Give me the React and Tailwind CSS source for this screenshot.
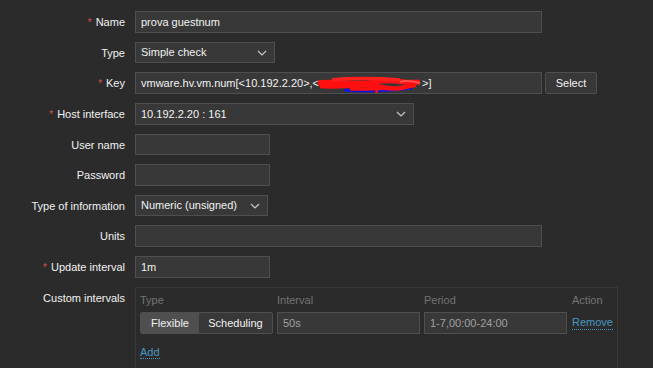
import React from 'react';

const Chevron = () => (
  <svg width="10" height="6" viewBox="0 0 10 6" className="shrink-0">
    <path d="M1 1l4 4 4-4" fill="none" stroke="#c8c8c8" strokeWidth="1.2" />
  </svg>
);

const Label = ({ text, req }) => (
  <div className="w-[125px] shrink-0 text-right pr-0 leading-[22px] whitespace-nowrap">
    {req && <span className="text-[#d64e4e] mr-[4px] text-[10px]">*</span>}
    {text}
  </div>
);

const Input = ({ w, value, children }) => (
  <div className={`${w} relative h-[22px] bg-[#383838] border border-[#4f4f4f] px-[5px] leading-[20px] whitespace-nowrap overflow-hidden`}>
    {value}
    {children}
  </div>
);

const Select = ({ w, value }) => (
  <div className={`${w} h-[21px] bg-[#383838] border border-[#4f4f4f] pl-[5px] pr-[7px] flex items-center justify-between`}>
    <span>{value}</span>
    <Chevron />
  </div>
);

const Scribble = () => (
  <svg className="absolute left-[180px] top-[2px]" width="108" height="20" viewBox="0 0 108 20">
    <path d="M28 15 C50 17, 72 16, 96 13" stroke="#1515d8" strokeWidth="3" fill="none" />
    <path d="M2 8 C20 5, 40 11, 60 7 S85 9, 104 7" stroke="#ff1010" strokeWidth="5" fill="none" />
    <path d="M4 11 C25 13, 45 8, 65 12 S88 11, 100 10" stroke="#ff1010" strokeWidth="4.5" fill="none" />
    <path d="M16 5 C35 3, 55 3, 84 5" stroke="#ff2020" strokeWidth="3.5" fill="none" />
    <path d="M62 10 L60 19" stroke="#ff1010" strokeWidth="2.5" fill="none" />
    <path d="M34 14 C48 15, 60 14, 76 13" stroke="#ff1010" strokeWidth="3" fill="none" />
    <path d="M84 7 C90 5, 96 6, 104 8" stroke="#ff5050" strokeWidth="2" fill="none" />
  </svg>
);

export default function App() {
  const rows = [
    { h: 'h-[31px]', label: 'Name', req: true, el: <Input w="w-[407px]" value="prova guestnum" /> },
    { h: 'h-[30px]', label: 'Type', el: <Select w="w-[140px]" value="Simple check" /> },
    {
      h: 'h-[31px]', label: 'Key', req: true,
      el: (
        <div className="flex gap-[3px]">
          <Input w="w-[407px]" value="vmware.hv.vm.num[<10.192.2.20>,<">
            <span className="absolute left-[286px] top-0">&gt;]</span>
            <Scribble />
          </Input>
          <div className="w-[52px] h-[22px] bg-[#383838] border border-[#4f4f4f] rounded-[2px] flex items-center justify-center">Select</div>
        </div>
      ),
    },
    { h: 'h-[31px]', label: 'Host interface', req: true, el: <Select w="w-[279px] !h-[22px]" value="10.192.2.20 : 161" /> },
    { h: 'h-[30px]', label: 'User name', el: <Input w="w-[135px] !h-[21px]" value="" /> },
    { h: 'h-[31px]', label: 'Password', el: <Input w="w-[135px]" value="" /> },
    { h: 'h-[30px]', label: 'Type of information', el: <Select w="w-[133px]" value="Numeric (unsigned)" /> },
    { h: 'h-[31px]', label: 'Units', el: <Input w="w-[407px]" value="" /> },
    { h: 'h-[31px]', label: 'Update interval', req: true, el: <Input w="w-[135px]" value="1m" /> },
  ];

  return (
    <div className="w-[653px] h-[368px] overflow-hidden bg-[#2b2b2b] text-[#f2f2f2] text-[11px] font-['Liberation_Sans',Arial,sans-serif] pt-[11px]">
      {rows.map((r, i) => (
        <div key={i} className={`${r.h} flex gap-[10px] items-start`}>
          <Label text={r.label} req={r.req} />
          {r.el}
        </div>
      ))}
      <div className="flex gap-[10px] items-start">
        <div className="w-[125px] shrink-0 text-right leading-[22px]">Custom intervals</div>
        <div className="w-[483px] h-[100px] border border-[#383838] px-[4px]">
          <div className="flex h-[24px] items-center text-[#737373]">
            <div className="w-[137px]">Type</div>
            <div className="w-[147px]">Interval</div>
            <div className="w-[148px]">Period</div>
            <div>Action</div>
          </div>
          <div className="flex items-center h-[22px]">
            <div className="w-[133px] h-[22px] flex border border-[#4f4f4f] rounded-[2px] overflow-hidden">
              <div className="w-[58px] bg-[#4f4f4f] flex items-center justify-center">Flexible</div>
              <div className="flex-1 bg-[#383838] flex items-center justify-center">Scheduling</div>
            </div>
            <div className="ml-[4px] w-[143px] h-[22px] bg-[#383838] border border-[#4f4f4f] px-[5px] leading-[20px] text-[#a0a0a0]">50s</div>
            <div className="ml-[4px] w-[143px] h-[22px] bg-[#383838] border border-[#4f4f4f] px-[5px] leading-[20px] text-[#a0a0a0]">1-7,00:00-24:00</div>
            <div className="ml-[5px] text-[#4796c4] border-b border-dotted border-[#4796c4] leading-[13px]">Remove</div>
          </div>
          <div className="mt-[10px]">
            <span className="text-[#4796c4] border-b border-dotted border-[#4796c4]">Add</span>
          </div>
        </div>
      </div>
    </div>
  );
}
